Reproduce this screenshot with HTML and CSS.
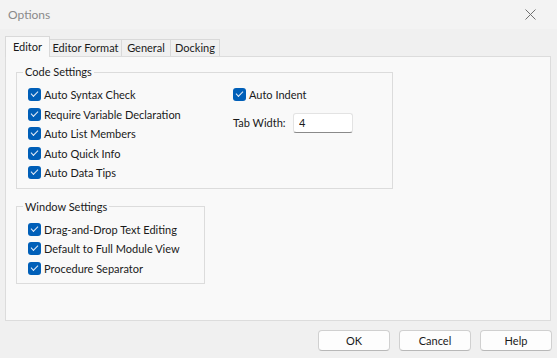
FILE: index.html
```html
<!DOCTYPE html>
<html lang="en">
<head>
  <meta charset="UTF-8">
  <title>Options</title>
  <link rel="stylesheet" href="styles.css">
</head>
<body>
  <div class="titlebar">
    <span class="title">Options</span>
    <svg class="close" width="11" height="11" viewBox="0 0 11 11">
      <path d="M0.5 0.5 L10.5 10.5 M10.5 0.5 L0.5 10.5" stroke="#707070" stroke-width="1" fill="none"/>
    </svg>
  </div>

  <div class="tabs">
    <div class="tab active tab-editor">Editor</div>
    <div class="tab tab-format">Editor Format</div>
    <div class="tab tab-general">General</div>
    <div class="tab tab-docking">Docking</div>
  </div>

  <div class="panel">
    <fieldset class="group code">
      <legend>Code Settings</legend>
      <div class="cols">
        <div class="col">
          <label class="row"><span class="box"></span>Auto Syntax Check</label>
          <label class="row"><span class="box"></span>Require Variable Declaration</label>
          <label class="row"><span class="box"></span>Auto List Members</label>
          <label class="row"><span class="box"></span>Auto Quick Info</label>
          <label class="row"><span class="box"></span>Auto Data Tips</label>
        </div>
        <div class="col">
          <label class="row"><span class="box"></span>Auto Indent</label>
          <div class="field">
            <span class="field-label">Tab Width:</span>
            <input class="text-input" type="text" value="4">
          </div>
        </div>
      </div>
    </fieldset>

    <fieldset class="group window">
      <legend>Window Settings</legend>
      <label class="row"><span class="box"></span>Drag-and-Drop Text Editing</label>
      <label class="row"><span class="box"></span>Default to Full Module View</label>
      <label class="row"><span class="box"></span>Procedure Separator</label>
    </fieldset>
  </div>

  <div class="buttons">
    <button>OK</button>
    <button>Cancel</button>
    <button>Help</button>
  </div>
</body>
</html>
```

FILE: styles.css
```css
body {
  margin: 0;
  background-color: #f0f0f0;
  font-family: Lato, "Liberation Sans", sans-serif;
  font-size: 11px;
  color: #1a1a1a;
}
.titlebar {
  height: 29px;
  background-color: #f3f3f3;
  display: flex;
  align-items: center;
  justify-content: space-between;
  padding: 0 21px 0 8px;
}
.title {
  font-size: 12px;
  color: #8a8a8a;
}
.tabs {
  display: flex;
  align-items: flex-end;
  height: 20px;
  margin-top: 7px;
  padding-left: 5px;
  position: relative;
  z-index: 1;
}
.tab {
  box-sizing: border-box;
  height: 17px;
  line-height: 16px;
  border: 1px solid #d9d9d9;
  border-bottom: none;
  background-color: #f0f0f0;
  text-align: center;
  white-space: nowrap;
  margin-left: -1px;
}
.tab.active {
  height: 21px;
  line-height: 19px;
  margin-left: 0;
  margin-bottom: -1px;
  background-color: #f9f9f9;
}
.tab-editor { width: 45px; }
.tab-format { width: 73px; }
.tab-general { width: 50px; }
.tab-docking { width: 50px; }
.panel {
  box-sizing: border-box;
  height: 265px;
  margin: 0 6px 0 5px;
  padding: 7px 10px 0 10px;
  border: 1px solid #dcdcdc;
  background-color: #f9f9f9;
}
.group {
  box-sizing: border-box;
  margin: 0;
  padding: 5px 11px 5px 11px;
  border: 1px solid #dcdcdc;
}
.group legend {
  padding: 0 2px;
  margin-left: -5px;
  line-height: 16px;
}
.code { width: 377px; }
.window {
  width: 189px;
  margin-top: 10px;
}
.cols {
  display: grid;
  grid-template-columns: 205px 1fr;
}
.row {
  display: flex;
  align-items: center;
  gap: 3px;
  height: 19.5px;
  white-space: nowrap;
}
.box {
  position: relative;
  width: 13px;
  height: 13px;
  border-radius: 3px;
  background-color: #005fb8;
  flex: none;
}
.box::after {
  content: "";
  position: absolute;
  left: 3px;
  top: 3px;
  width: 6px;
  height: 3px;
  border-left: 1.2px solid #e6eef8;
  border-bottom: 1.2px solid #e6eef8;
  transform: rotate(-45deg);
}
.field {
  display: flex;
  align-items: center;
  margin-top: 8px;
}
.field-label {
  width: 60px;
}
.text-input {
  box-sizing: border-box;
  width: 60px;
  height: 20px;
  padding: 0 5px;
  border: 1px solid #e3e3e3;
  border-bottom-color: #8a8a8a;
  border-radius: 3px;
  background-color: white;
  font-family: inherit;
  font-size: 11px;
  color: #1a1a1a;
}
.buttons {
  display: flex;
  justify-content: flex-end;
  gap: 9px;
  margin-top: 9px;
  padding-right: 5px;
}
.buttons button {
  box-sizing: border-box;
  width: 72px;
  height: 21px;
  border: 1px solid #d0d0d0;
  border-bottom-color: #b8b8b8;
  border-radius: 4px;
  background-color: #fdfdfd;
  font-family: inherit;
  font-size: 11px;
  color: #1a1a1a;
  padding: 0;
}
```
